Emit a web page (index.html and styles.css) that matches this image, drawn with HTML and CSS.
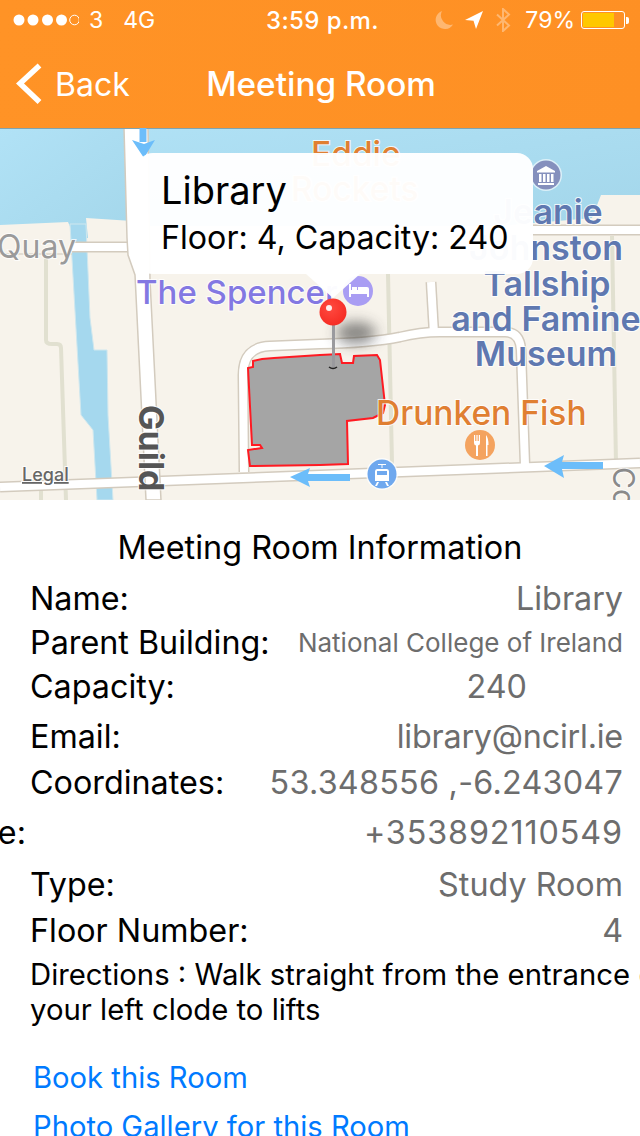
FILE: index.html
```html
<!DOCTYPE html>
<html lang="en">
<head>
    <meta charset="UTF-8">
    <meta name="viewport" content="width=device-width, initial-scale=1.0">
    <title>Meeting Room</title>
    <link rel="stylesheet" href="styles.css">
</head>
<body>
    <header class="top-bar">
        <div class="status-bar">
            <div class="status-left">
                <svg class="signal" width="66" height="14" viewBox="0 0 66 14">
                    <circle cx="6" cy="7" r="5.5" fill="#fff"/>
                    <circle cx="20" cy="7" r="5.5" fill="#fff"/>
                    <circle cx="34.5" cy="7" r="5.5" fill="#fff"/>
                    <circle cx="48.5" cy="7" r="5.5" fill="#fff"/>
                    <circle cx="61.5" cy="7" r="4.8" fill="none" stroke="#fff" stroke-width="1"/>
                </svg>
                <span class="carrier">3</span>
                <span class="network">4G</span>
            </div>
            <div class="status-time">3:59 p.m.</div>
            <div class="status-right">
                <svg width="20" height="20" viewBox="0 0 20 20"><path d="M8 1a9.300 9.300 0 1 0 11 13.500A9.500 9.500 0 0 1 8 1z" fill="#fff" opacity="0.35"/></svg>
                <svg class="gap-arrow" width="20" height="20" viewBox="0 0 20 20"><path d="M19 1L1 10l8.500 0.800L12 19z" fill="#fff"/></svg>
                <svg class="gap-bt" width="16" height="24" viewBox="0 0 16 24"><path d="M2 6.500L14 17.500 8 23V1l6 5.500L2 17.500" fill="none" stroke="#fff" stroke-width="2" opacity="0.35"/></svg>
                <span class="battery-text">79%</span>
                <div class="battery"><div class="battery-fill"></div></div>
                <div class="battery-nub"></div>
            </div>
        </div>
        <nav class="nav-bar">
            <a class="back">
                <svg width="26" height="42" viewBox="0 0 26 42"><path d="M23.500 2.500L4 20.500l19.500 18.500" fill="none" stroke="#fff" stroke-width="5.500"/></svg>
                <span>Back</span>
            </a>
            <div class="nav-title">Meeting Room</div>
        </nav>
    </header>

    <section class="map">
        <svg class="map-canvas" width="640" height="372" viewBox="0 128 640 372">
            <defs>
                <linearGradient id="water" x1="0" y1="0" x2="1" y2="1">
                    <stop offset="0" stop-color="#b1e2f6"/>
                    <stop offset="1" stop-color="#a3d6ea"/>
                </linearGradient>
                <radialGradient id="pinHead" cx="0.4" cy="0.35" r="0.7">
                    <stop offset="0" stop-color="#ff4a40"/>
                    <stop offset="1" stop-color="#f52a22"/>
                </radialGradient>
                <filter id="blur" x="-60%" y="-100%" width="220%" height="300%"><feGaussianBlur stdDeviation="7"/></filter>
            </defs>

            <rect x="0" y="128" width="640" height="372" fill="#f7f3eb"/>
            <path d="M0 128H640V195H601L592 218L500 226H148V128H0z" fill="url(#water)"/>
            <path d="M0 128H148V222L86 218L88 238H75L68 222L0 225z" fill="url(#water)"/>
            <path d="M70 224H86L90 318L94 350H107L108 415L113 500H97L93 430L81 415z" fill="#a5d8ee" stroke="#cfe7ee" stroke-width="1"/>

            <g fill="none" stroke-linecap="butt" stroke-linejoin="round">
                <g stroke="#e1e0d0" stroke-width="4">
                    <path d="M46 254v86q0 4 6 4h5q4 0 4 4l5 152"/>
                    <path d="M41 488v12"/>
                    <path d="M388 274l4 190"/>
                    <path d="M612 236l4 228"/>
                </g>
                <path d="M0 254H72" stroke="#ddd6ca" stroke-width="1.500"/>
                <g stroke="#d3cbbe" stroke-width="11">
                    <path d="M244 472L243 375Q243 347 270 346L320 344Q370 343 400 337Q420 332 440 332H505Q520 332 521 350L525 465"/>
                    <path d="M0 487L640 463"/>
                    <path d="M530 230H640"/>
                    <path d="M431 282l3 52"/>
                    <path d="M72 247H130"/>
                </g>
                <g stroke="#fff" stroke-width="8">
                    <path d="M244 472L243 375Q243 347 270 346L320 344Q370 343 400 337Q420 332 440 332H505Q520 332 521 350L525 465"/>
                    <path d="M0 487L640 463"/>
                    <path d="M530 230H640"/>
                    <path d="M431 282l3 52"/>
                    <path d="M72 247H130"/>
                </g>
            </g>
            <path d="M124 128L127 238L128 255L135 275L146 500H161L150 280L148 128z" fill="#fff" stroke="#d3cbbe" stroke-width="1.500"/>

            <rect x="0" y="128" width="640" height="1" fill="#7fa3b0"/>
            <path d="M143 128v14" stroke="#6cbdfa" stroke-width="7"/>
            <path d="M132 140L144 158L155 140L144 144z" fill="#6cbdfa"/>
            <path d="M290 477L310 468L308 474H350V481H308L310 487z" fill="#6cbdfa"/>
            <path d="M544 466L564 455L562 462H603V469H562L564 478z" fill="#6cbdfa"/>

            <path d="M253 361L262 359L274 358L320 355L340 354L342 363L353 363L354 356L377 355L380 360L385 405L383 413L373 418L347 421L348 464L320 465L250 466L248 450L262 448L260 445L252 445L248 368L253 367z" fill="#a5a5a5" stroke="#ff1a22" stroke-width="2"/>

            <g class="map-label-road">
                <text class="label-quay" x="-3" y="258">Quay</text>
                <text class="label-guild" transform="translate(139 405) rotate(90)">Guild</text>
                <text class="label-co" transform="translate(613 467) rotate(90)">Co</text>
            </g>
            <g class="label-poi-orange">
                <text x="311" y="166">Eddie</text>
                <text x="291" y="201">Rockets</text>
                <text x="376" y="425">Drunken Fish</text>
            </g>
            <g class="label-poi-blue">
                <text x="548" y="224">Jeanie</text>
                <text x="546" y="260">Johnston</text>
                <text x="547" y="296">Tallship</text>
                <text x="546" y="331">and Famine</text>
                <text x="546" y="366">Museum</text>
            </g>
            <text class="label-hotel" x="136" y="304">The Spencer</text>
            <text class="label-legal" x="22" y="481">Legal</text>

            <!-- poi icons -->
            <g>
                <circle cx="546" cy="175" r="16" fill="#fff" opacity="0.6"/>
                <circle cx="546" cy="175" r="14.500" fill="#8590bd"/>
                <path d="M546 166l9 5v1.500h-18V171zM538 183h16v2h-16zM539 174h2.500v8H539zM543 174h2.500v8H543zM547 174h2.500v8H547zM551 174h2.500v8H551z" fill="#fff"/>
            </g>
            <g>
                <circle cx="358" cy="291" r="15" fill="#a99df3"/>
                <path d="M349 284h2v6h1v-3h5v3h1v-3h9q2 0 2 2v8h-2v-3h-16v3h-2z" fill="#fff"/>
            </g>
            <g>
                <circle cx="480" cy="445" r="15" fill="#f4a35f"/>
                <path d="M474 435h1.200v6h1.200v-6h1.200v6h1.200v-6h1.200v8q0 2-2 2.500V456h-2v-10.500q-2-.500-2-2.500zM486 435q2.500 3 2.500 10h-1V456h-1.500z" fill="#fff"/>
            </g>
            <g>
                <circle cx="382" cy="474" r="16" fill="#fff" opacity="0.7"/>
                <circle cx="382" cy="474" r="14.500" fill="#6fa8ee"/>
                <path d="M377 469h10q2 0 2 2.500V481h-14v-9.500q0-2.500 2-2.500zM378 464h8v1h-3.500v3h-1v-3H378zM377 482h2l-2 4h-2zM385 482h2l2 4h-2z" fill="#fff"/>
                <rect x="377" y="471" width="10" height="4" fill="#6fa8ee"/>
            </g>

            <ellipse cx="356" cy="333" rx="20" ry="11" fill="#3a3a3a" opacity="0.6" filter="url(#blur)"/>
            <rect x="332" y="322" width="3" height="45" fill="#9a9a9e"/>
            <path d="M329 367q4 3 8 0" fill="none" stroke="#222" stroke-width="1.500"/>
            <circle cx="333" cy="312" r="13.500" fill="url(#pinHead)"/>
            <circle cx="329" cy="308" r="3" fill="#fff" opacity="0.9"/>
        </svg>

        <div class="callout">
            <div class="callout-title">Library</div>
            <div class="callout-sub">Floor: 4, Capacity: 240</div>
            <div class="callout-tail"></div>
        </div>
    </section>

    <main class="info">
        <h1 class="info-title">Meeting Room Information</h1>
        <div class="row row-name"><span>Name:</span><span class="value">Library</span></div>
        <div class="row row-parent"><span>Parent Building:</span><span class="value value-small">National College of Ireland</span></div>
        <div class="row row-capacity"><span>Capacity:</span><span class="value value-mid">240</span></div>
        <div class="row row-email"><span>Email:</span><span class="value value-email">library@ncirl.ie</span></div>
        <div class="row row-coords"><span>Coordinates:</span><span class="value value-coords">53.348556 ,-6.243047</span></div>
        <div class="row row-phone"><span class="label-cut"><span>Telephone:</span></span><span class="value value-phone">+353892110549</span></div>
        <div class="row row-type"><span>Type:</span><span class="value">Study Room</span></div>
        <div class="row row-floor"><span>Floor Number:</span><span class="value">4</span></div>
        <p class="directions">Directions : Walk straight from the entrance on<br>your left clode to lifts</p>
        <a class="link link-book">Book this Room</a>
        <a class="link link-photo">Photo Gallery for this Room</a>
    </main>
</body>
</html>
```

FILE: styles.css
```css
html, body {
    margin: 0;
    height: 1136px;
    overflow: hidden;
    background-color: #fff;
    font-family: Inter, "Noto Sans", sans-serif;
}
.top-bar {
    height: 128px;
    background: linear-gradient(100deg, #ff9326, #fe9024);
    color: #fff;
}
.status-bar {
    height: 40px;
    display: grid;
    grid-template-columns: 1fr auto 1fr;
    align-items: center;
    font-size: 23px;
    padding: 0 11px 0 13px;
}
.status-left {
    display: flex;
    align-items: center;
}
.carrier {
    margin-left: 10px;
}
.network {
    margin-left: 20px;
}
.status-time {
    margin-left: 3px;
    font-size: 24px;
    font-weight: 500;
    letter-spacing: 0.4px;
}
.status-right {
    display: flex;
    align-items: center;
    justify-content: flex-end;
}
.gap-arrow {
    margin-left: 10px;
}
.gap-bt {
    margin-left: 11px;
}
.battery-text {
    margin-left: 14px;
}
.battery {
    width: 44px;
    height: 18px;
    margin-left: 6px;
    border: 1px solid #fff;
    border-radius: 3px;
    padding: 1px;
    box-sizing: border-box;
}
.battery-fill {
    width: 78%;
    height: 100%;
    background-color: #ffc800;
}
.battery-nub {
    width: 3px;
    height: 7px;
    background-color: #fff;
    border-radius: 0 2px 2px 0;
    margin-left: 1px;
}
.nav-bar {
    height: 88px;
    display: grid;
    grid-template-columns: 1fr auto 1fr;
    align-items: center;
    padding: 0 0 0 16px;
    box-sizing: border-box;
    font-size: 32px;
}
.back {
    display: flex;
    align-items: center;
    gap: 13px;
}
.nav-title {
    font-size: 33.3px;
    font-weight: 500;
    margin-right: 14px;
}

.map {
    position: relative;
    height: 372px;
}
.map-canvas {
    display: block;
}
.map-canvas text {
    paint-order: stroke;
    stroke: #fff;
    stroke-width: 2px;
    stroke-opacity: 0.8;
}
.label-quay {
    font-size: 32px;
    fill: #9a9a9a;
}
.label-guild {
    font-size: 34px;
    font-weight: 700;
    fill: #555;
}
.label-co {
    font-size: 30px;
    fill: #8a8a8a;
}
.label-poi-orange {
    font-size: 33.5px;
    font-weight: 500;
    fill: #e07f32;
}
.label-poi-blue {
    font-size: 34px;
    font-weight: 600;
    fill: #5f78b0;
    text-anchor: middle;
}
.label-hotel {
    font-size: 33px;
    font-weight: 500;
    fill: #8378e2;
}
.label-legal {
    font-size: 18px;
    font-weight: 500;
    fill: #666;
    text-decoration: underline;
}
.callout {
    position: absolute;
    left: 137px;
    top: 25px;
    width: 396px;
    height: 121px;
    box-sizing: border-box;
    padding: 12px 0 0 24px;
    background-color: rgba(255, 255, 255, 0.97);
    border-radius: 16px;
    color: #000;
}
.callout-title {
    font-size: 38px;
    line-height: 50px;
}
.callout-sub {
    margin-top: 2px;
    font-size: 32.2px;
    line-height: 42px;
}
.callout-tail {
    position: absolute;
    left: 169px;
    top: 121px;
    width: 0;
    height: 0;
    border-left: 27px solid transparent;
    border-right: 27px solid transparent;
    border-top: 24px solid rgba(255, 255, 255, 0.97);
}

.info {
    color: #000;
    font-size: 32.3px;
}
.info-title {
    margin: 0;
    height: 96px;
    padding-top: 27px;
    box-sizing: border-box;
    font-size: 32.4px;
    font-weight: 400;
    line-height: 42px;
    text-align: center;
}
.row {
    display: flex;
    justify-content: space-between;
    align-items: center;
    height: 44px;
    padding: 0 17px 0 30px;
    white-space: nowrap;
}
.row-name {
    margin-top: -20px;
}
.row-capacity {
    margin-bottom: 6px;
}
.row-email {
    margin-bottom: 2px;
}
.row-coords {
    margin-bottom: 6px;
}
.row-phone {
    padding-left: 0;
    margin-bottom: 8px;
}
.row-type {
    margin-bottom: 2px;
}
.value {
    color: #6d6d6d;
}
.value-small {
    font-size: 26px;
}
.value-mid {
    margin-right: 96px;
}
.value-email {
    letter-spacing: -0.2px;
}
.value-coords {
    letter-spacing: 0.25px;
}
.value-phone {
    letter-spacing: 0.9px;
}
.label-cut {
    display: flex;
    justify-content: flex-end;
    width: 26px;
}
.directions {
    margin: 5px 0 0 30px;
    width: 610px;
    overflow: hidden;
    font-size: 29.3px;
    line-height: 35px;
    white-space: nowrap;
}
.link {
    display: block;
    margin: 0 0 0 33px;
    color: #007aff;
    font-size: 29.2px;
    line-height: 40px;
}
.link-book {
    margin-top: 31px;
}
.link-photo {
    margin-top: 9px;
}
```
